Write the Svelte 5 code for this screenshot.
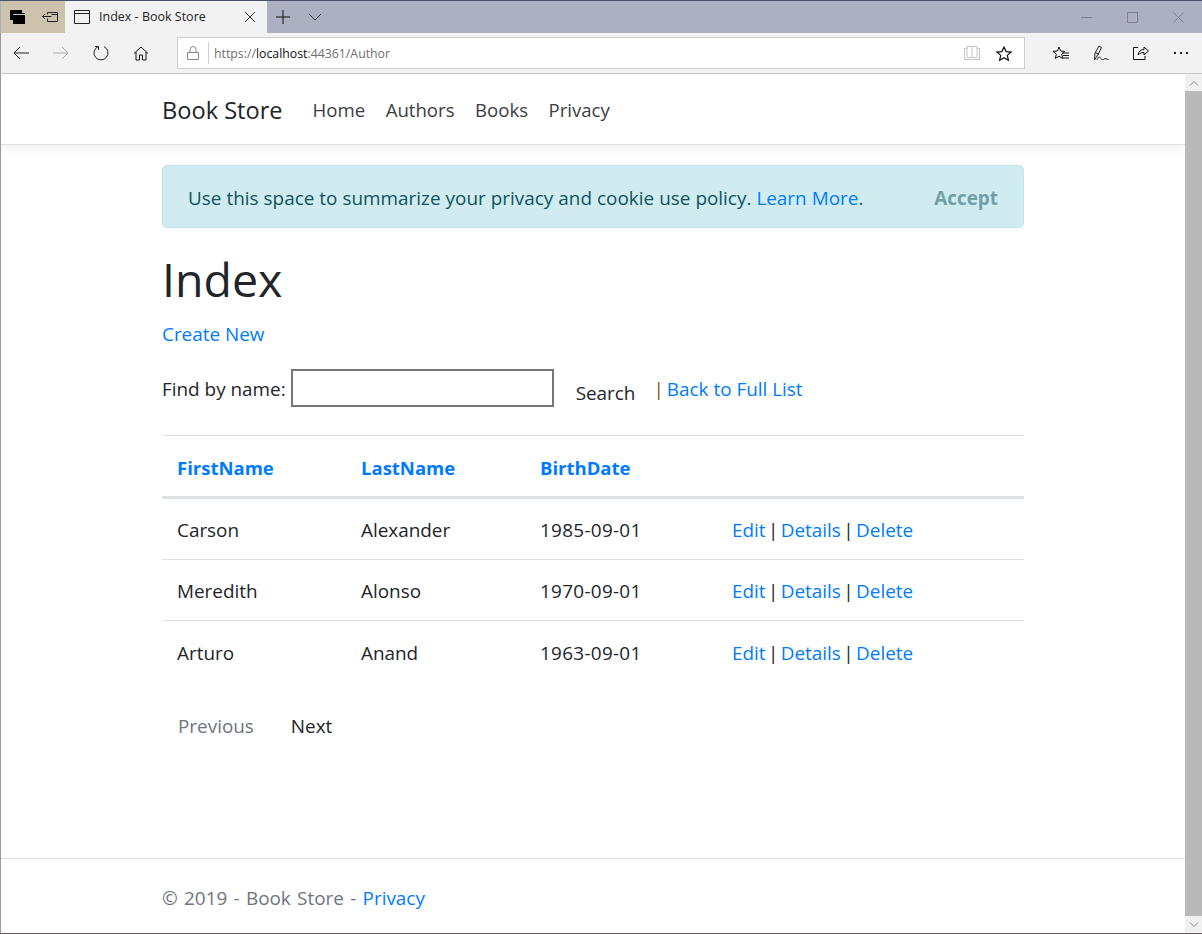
<script>
  const authors = [
    { first: 'Carson', last: 'Alexander', date: '1985-09-01' },
    { first: 'Meredith', last: 'Alonso', date: '1970-09-01' },
    { first: 'Arturo', last: 'Anand', date: '1963-09-01' }
  ];
</script>

<div class="window">
  <header class="titlebar">
    <div class="tabtools">
      <svg width="16" height="15" viewBox="0 0 16 15"><path d="M0 0h12v3h3v11H3v-4H0z" fill="#000"/><path d="M3 4.500h12" stroke="#cfc5b3" fill="none"/></svg>
      <svg width="16" height="16" viewBox="0 0 16 16" fill="none" stroke="#222"><path d="M5.500 3.500h10v9h-10V9.500M5.500 3.500v2M.5 7.500h9M3 5 .5 7.500 3 10M9.500 5.500h6"/></svg>
    </div>
    <div class="tab">
      <svg width="16" height="14" viewBox="0 0 16 14" fill="none" stroke="#222"><path d="M.5.5h15v13H.5zM.5 3.500h15"/></svg>
      <span class="tabtitle">Index - Book Store</span>
      <svg width="12" height="12" viewBox="0 0 12 12" fill="none" stroke="#333"><path d="M1 1l10 10M11 1 1 11"/></svg>
    </div>
    <div class="newtab">
      <svg width="14" height="14" viewBox="0 0 14 14" fill="none" stroke="#111"><path d="M7 0v14M0 7h14"/></svg>
      <svg width="14" height="8" viewBox="0 0 14 8" fill="none" stroke="#333"><path d="M1 1l6 6 6-6"/></svg>
    </div>
    <div class="winctl">
      <svg width="11" height="11" viewBox="0 0 11 11" fill="none" stroke="#7f8089"><path d="M0 5.500h11"/></svg>
      <svg width="11" height="11" viewBox="0 0 11 11" fill="none" stroke="#7f8089"><path d="M.5.5h10v10H.5z"/></svg>
      <svg width="11" height="11" viewBox="0 0 11 11" fill="none" stroke="#7f8089"><path d="M.5.5l10 10M10.500.5l-10 10"/></svg>
    </div>
  </header>

  <div class="toolbar">
    <div class="navbtns">
      <svg width="16" height="14" viewBox="0 0 16 14" fill="none" stroke="#222"><path d="M16 7H1M7 1 1 7l6 6"/></svg>
      <svg width="16" height="14" viewBox="0 0 16 14" fill="none" stroke="#aaa"><path d="M0 7h15M9 1l6 6-6 6"/></svg>
      <svg width="16" height="16" viewBox="0 0 16 16" fill="none" stroke="#222"><path d="M5 1.600A7 7 0 1 0 11 1.600M5.500 5V1.500H2"/></svg>
      <svg width="16" height="15" viewBox="0 0 16 15" fill="none" stroke="#111"><path d="M1 7.500 8 1l7 6.500M3 6v8h3.500V9h3v5H13V6"/></svg>
    </div>
    <div class="address">
      <svg class="lock" width="12" height="14" viewBox="0 0 12 14" fill="none" stroke="#888"><path d="M.5 6.500h11v7H.5zM3 6.500V3.500a3 3 0 0 1 6 0v3"/></svg>
      <span class="divider"></span>
      <span class="url">https://<b>localhost</b>:44361/Author</span>
      <svg class="book" width="16" height="14" viewBox="0 0 16 14" fill="none" stroke="#c4c4c4"><path d="M.5 2.500H3M13 2.500h2.500v11H.5v-11M3 .5h4.500l.5 1 .5-1H13v11H8.500L8 12l-.5-.5H3zM8 1.500V12"/></svg>
      <svg class="star" width="16" height="15" viewBox="0 0 16 15" fill="none" stroke="#111" stroke-width="1.200"><path d="M8 1l2.100 4.600 4.900.5-3.700 3.300 1.100 4.900L8 11.800l-4.400 2.500 1.100-4.900L1 6.100l4.900-.5z"/></svg>
    </div>
    <div class="tools">
      <svg width="16" height="15" viewBox="0 0 16 15" fill="none" stroke="#111"><path d="M6 1l1.600 4 4.400.4-3.300 2.800 1 4.300L6 10.200l-3.700 2.300 1-4.300L0 5.400 4.400 5z" /><path d="M9 7h7M10 9.500h6M10 12h6"/></svg>
      <svg width="16" height="16" viewBox="0 0 16 16" fill="none" stroke="#222"><path d="M1.500 15 2 8l4-7 2.500 1.500-3.500 7zM2.500 7.500l3.500 2M4 15c1.500-3 2-4 3-2.500s2 2.500 3.500 2l1.500-1 3.500 1"/></svg>
      <svg width="16" height="15" viewBox="0 0 16 15" fill="none" stroke="#111"><path d="M5 1.500H.5v12H12V10M5 9c.5-3.500 3-5.500 6-5.500V1l4.500 4-4.500 4V6.500C8.500 6.500 6.500 7.500 5 9z"/></svg>
      <svg width="16" height="4" viewBox="0 0 16 4" fill="#222"><rect x="1" y="1" width="2" height="2"/><rect x="7" y="1" width="2" height="2"/><rect x="13" y="1" width="2" height="2"/></svg>
    </div>
  </div>

  <div class="viewport">
    <div class="page">
      <nav class="navbar">
        <div class="container navrow">
          <a class="brand" href="#top">Book Store</a>
          <a class="navlink" href="#top">Home</a>
          <a class="navlink" href="#top">Authors</a>
          <a class="navlink" href="#top">Books</a>
          <a class="navlink" href="#top">Privacy</a>
        </div>
      </nav>

      <main class="container">
        <div class="alert">
          <span>Use this space to summarize your privacy and cookie use policy. <a href="#top">Learn More</a>.</span>
          <button class="accept">Accept</button>
        </div>

        <h1>Index</h1>
        <p class="create"><a href="#top">Create New</a></p>

        <form class="search">
          <label for="q">Find by name:</label>
          <input id="q" type="text" />
          <button type="button" class="submit">Search</button>
          <span class="pipe">|</span>
          <a href="#top">Back to Full List</a>
        </form>

        <table>
          <colgroup>
            <col class="c1" /><col class="c2" /><col class="c3" /><col />
          </colgroup>
          <thead>
            <tr>
              <th><a href="#top">FirstName</a></th>
              <th><a href="#top">LastName</a></th>
              <th><a href="#top">BirthDate</a></th>
              <th></th>
            </tr>
          </thead>
          <tbody>
            {#each authors as a}
              <tr>
                <td>{a.first}</td>
                <td>{a.last}</td>
                <td class="date">{a.date}</td>
                <td class="actions"><a href="#top">Edit</a> | <a href="#top">Details</a> | <a href="#top">Delete</a></td>
              </tr>
            {/each}
          </tbody>
        </table>

        <div class="pager">
          <span class="prev">Previous</span>
          <span class="next">Next</span>
        </div>
      </main>

      <footer>
        <div class="container">© 2019 - Book Store - <a href="#top">Privacy</a></div>
      </footer>
    </div>

    <div class="scrollbar">
      <div class="sbtn"><svg width="10" height="6" viewBox="0 0 10 6" fill="none" stroke="#8a8a8a"><path d="M1 5.500 5 1.500l4 4"/></svg></div>
      <div class="thumb"></div>
      <div class="sbtn"><svg width="10" height="6" viewBox="0 0 10 6" fill="none" stroke="#8a8a8a"><path d="M1 .5l4 4 4-4"/></svg></div>
    </div>
  </div>
</div>

<style>
  :global(body) {
    margin: 0;
    overflow: hidden;
  }
  .window {
    width: 1202px;
    height: 934px;
    display: flex;
    flex-direction: column;
    overflow: hidden;
    font-family: "Open Sans", "Noto Sans", sans-serif;
    color: #212529;
    box-sizing: border-box;
    border-bottom: 1px solid #6b5a5e;
  }
  svg {
    display: block;
    flex: none;
  }

  .titlebar {
    height: 33px;
    flex: none;
    display: flex;
    align-items: stretch;
    box-sizing: border-box;
    border-top: 1px solid #4a5068;
    background: #adb0c0;
  }
  .tabtools {
    width: 64px;
    margin-left: 1px;
    background: #cdc2ae;
    display: flex;
    align-items: center;
    gap: 16px;
    padding-left: 9px;
    box-sizing: border-box;
  }
  .tab {
    width: 202px;
    background: #f2f2f2;
    display: flex;
    align-items: center;
    padding-left: 9px;
    padding-right: 11px;
    box-sizing: border-box;
  }
  .tabtitle {
    flex: 1;
    margin-left: 9px;
    margin-bottom: 2px;
    font-size: 12.5px;
    color: #222;
  }
  .newtab {
    display: flex;
    align-items: center;
    gap: 18px;
    margin-left: 9px;
  }
  .winctl {
    margin-left: auto;
    display: flex;
    align-items: center;
    gap: 35px;
    padding-right: 18px;
    padding-bottom: 0;
  }

  .toolbar {
    height: 41px;
    flex: none;
    box-sizing: border-box;
    background: #f2f2f2;
    border-bottom: 1px solid #c9c9c9;
    border-left: 1px solid #9a9a9a;
    display: flex;
    align-items: center;
  }
  .navbtns {
    width: 176px;
    display: flex;
    align-items: center;
    gap: 24px;
    padding-left: 12px;
    box-sizing: border-box;
  }
  .address {
    width: 848px;
    height: 32px;
    box-sizing: border-box;
    background: #fff;
    border: 1px solid #cfcfcf;
    display: flex;
    align-items: center;
  }
  .lock {
    margin-left: 9px;
  }
  .divider {
    width: 1px;
    height: 22px;
    background: #cfcfcf;
    margin-left: 9px;
  }
  .url {
    margin-left: 5px;
    font-size: 12.3px;
    color: #6f6f6f;
    flex: 1;
  }
  .url b {
    font-weight: 400;
    color: #111;
  }
  .book {
    margin-right: 16px;
  }
  .star {
    margin-right: 12px;
  }
  .tools {
    display: flex;
    align-items: center;
    gap: 24px;
    margin-left: 28px;
  }

  .viewport {
    flex: 1;
    min-height: 0;
    display: flex;
  }
  .page {
    flex: 1;
    min-width: 0;
    display: flex;
    flex-direction: column;
    background: #fff;
    border-left: 1px solid #9a9a9a;
  }
  .container {
    width: 862px;
    margin-left: 161px;
  }
  .navbar {
    height: 71px;
    flex: none;
    box-sizing: border-box;
    border-bottom: 1px solid #dee2e6;
    box-shadow: 0 5px 8px rgba(0, 0, 0, 0.05);
  }
  .navrow {
    display: flex;
    align-items: center;
    height: 70px;
  }
  .brand {
    font-size: 23.6px;
    color: #212529;
    text-decoration: none;
    margin-right: 30px;
    padding-top: 1px;
  }
  .navlink {
    font-size: 18.6px;
    color: #3b3e42;
    text-decoration: none;
    margin-right: 20.5px;
  }

  a {
    color: #007bff;
    text-decoration: none;
  }
  main {
    flex: none;
    font-size: 18.9px;
  }
  .alert {
    margin-top: 20px;
    height: 63px;
    box-sizing: border-box;
    background: #d1ecf1;
    border: 1px solid #bee5eb;
    border-radius: 5px;
    color: #0c5460;
    display: flex;
    align-items: center;
    justify-content: space-between;
    padding: 2px 25px 0;
    word-spacing: 0.15px;
  }
  .alert a {
    color: #007bff;
  }
  .accept {
    font: inherit;
    font-weight: 700;
    color: #6f9fa7;
    background: none;
    border: 0;
    padding: 0;
  }
  h1 {
    font-size: 46.5px;
    font-weight: 400;
    line-height: 60px;
    margin: 21px 0 0;
  }
  .create {
    margin: 10px 0 0;
    line-height: 30px;
  }
  .search {
    display: flex;
    align-items: center;
    margin-top: 20px;
    height: 38px;
  }
  .search label,
  .search > a,
  .pipe {
    padding-top: 2px;
  }
  .search input {
    width: 263px;
    height: 38px;
    box-sizing: border-box;
    border: 2px solid #767676;
    background: #fff;
    margin-left: 5px;
    padding: 0;
  }
  .submit {
    font: inherit;
    background: none;
    border: 0;
    padding: 10px 0 0;
    margin-left: 22px;
    color: #212529;
  }
  .pipe {
    margin-left: 18px;
    margin-right: 3px;
    color: #7a5510;
  }
  table {
    width: 862px;
    margin-top: 28px;
    border-collapse: collapse;
    table-layout: fixed;
  }
  .c1 { width: 184px; }
  .c2 { width: 179px; }
  .c3 { width: 192px; }
  th {
    text-align: left;
    padding: 2px 15px 0;
    height: 58px;
    border-top: 1px solid #dee2e6;
    border-bottom: 3px solid #dee2e6;
    font-weight: 700;
    font-size: 18.5px;
  }
  td {
    height: 58px;
    padding: 2px 15px 0;
    border-bottom: 1px solid #dee2e6;
  }
  tbody tr:last-child td {
    border-bottom: 0;
    height: 56px;
    padding-top: 4px;
  }
  .date {
    letter-spacing: 0.3px;
  }
  .actions {
    word-spacing: -2.5px;
  }
  .pager {
    display: flex;
    margin-top: 30px;
    line-height: 30px;
    padding-left: 16px;
    gap: 37px;
  }
  .prev {
    color: #6c757d;
  }
  footer {
    margin-top: auto;
    height: 75px;
    border-top: 1px solid #dee2e6;
    box-sizing: border-box;
    font-size: 18.9px;
    word-spacing: 1.4px;
    color: #6c757d;
    padding-top: 26px;
    flex: none;
  }
  .scrollbar {
    width: 17px;
    flex: none;
    background: #f0f0f0;
    display: flex;
    flex-direction: column;
  }
  .sbtn {
    height: 17px;
    flex: none;
    display: flex;
    align-items: center;
    justify-content: center;
  }
  .thumb {
    flex: 1;
    background: #b9b9b9;
  }
</style>
